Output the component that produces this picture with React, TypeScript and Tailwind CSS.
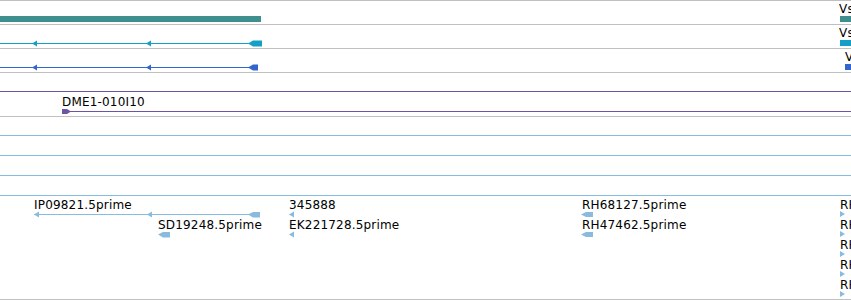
import React from "react";

function Label({ x, y, text }: { x: number; y: number; text: string }) {
  return (
    <div
      className="absolute whitespace-nowrap text-[12px] leading-[12px] tracking-[0.18px] text-black"
      style={{ left: x, top: y }}
    >
      {text}
    </div>
  );
}

function Divider() {
  return <div className="h-px w-full bg-[#c0c0c0] shrink-0" />;
}

export default function App() {
  return (
    <div
      className="w-[851px] h-[300px] bg-white overflow-hidden flex flex-col"
      style={{ fontFamily: '"DejaVu Sans", sans-serif' }}
    >
      <Divider />
      {/* Track 1 */}
      <div className="relative h-[23px] shrink-0">
        <svg className="absolute inset-0" width="851" height="23">
          <rect x="0" y="15" width="261" height="6" fill="#3f8f8f" />
          <rect x="840" y="15" width="11" height="6" fill="#3f8f8f" />
        </svg>
        <Label x={839} y={2} text="Vsx" />
      </div>
      <Divider />
      {/* Track 2 */}
      <div className="relative h-[23px] shrink-0">
        <svg className="absolute inset-0" width="851" height="23">
          <rect x="0" y="18" width="252" height="1" fill="#139fc6" />
          <polygon points="32,18.5 37,15.5 37,21.5" fill="#139fc6" />
          <polygon points="146,18.5 151,15.5 151,21.5" fill="#139fc6" />
          <polygon points="248,18.5 253,15.5 262,15.5 262,21.5 253,21.5" fill="#139fc6" />
          <rect x="840" y="15" width="11" height="6" fill="#139fc6" />
        </svg>
        <Label x={839} y={2} text="Vsx" />
      </div>
      <Divider />
      {/* Track 3 */}
      <div className="relative h-[23px] shrink-0">
        <svg className="absolute inset-0" width="851" height="23">
          <rect x="0" y="18" width="252" height="1" fill="#3366cc" />
          <polygon points="32,18.5 37,15.5 37,21.5" fill="#3366cc" />
          <polygon points="146,18.5 151,15.5 151,21.5" fill="#3366cc" />
          <polygon points="248,18.5 253,15.5 258,15.5 258,21.5 253,21.5" fill="#3366cc" />
          <rect x="845" y="15" width="6" height="6" fill="#3366cc" />
        </svg>
        <Label x={845} y={2} text="Vsx" />
      </div>
      <Divider />
      {/* Track 4 */}
      <div className="relative h-[43px] shrink-0">
        <svg className="absolute inset-0" width="851" height="43">
          <rect x="0" y="18" width="851" height="1" fill="#6e55a2" />
          <rect x="68" y="38" width="783" height="1" fill="#6e55a2" />
          <polygon points="62,36 67,36 71,38.5 67,41 62,41" fill="#6e55a2" />
        </svg>
        <Label x={62} y={23} text="DME1-010I10" />
      </div>
      <Divider />
      {/* Track 5 */}
      <div className="relative h-[182px] shrink-0">
        <svg className="absolute inset-0" width="851" height="182">
          <rect x="0" y="18" width="851" height="1" fill="#88bbdd" />
          <rect x="0" y="38" width="851" height="1" fill="#88bbdd" />
          <rect x="0" y="58" width="851" height="1" fill="#88bbdd" />
          <rect x="0" y="78" width="851" height="1" fill="#88bbdd" />
          <rect x="34" y="97" width="218" height="1" fill="#88bbdd" />
          <polygon points="34,97.5 39,94.5 39,100.5" fill="#88bbdd" />
          <polygon points="147,97.5 152,94.5 152,100.5" fill="#88bbdd" />
          <polygon points="248,97.5 253,95 260,95 260,100.5 253,100.5" fill="#88bbdd" />
          <polygon points="158,117.5 163,115 170,115 170,120.5 163,120.5" fill="#88bbdd" />
          <polygon points="289,97.5 294,94.5 294,100.5" fill="#88bbdd" />
          <polygon points="289,117.5 294,114.5 294,120.5" fill="#88bbdd" />
          <polygon points="581,97.5 586,95 593,95 593,100 586,100" fill="#88bbdd" />
          <polygon points="581,117.5 586,115 593,115 593,120 586,120" fill="#88bbdd" />
          <polygon points="840,94 845,97 840,100" fill="#88bbdd" />
          <polygon points="840,114 845,117 840,120" fill="#88bbdd" />
          <polygon points="840,134 845,137 840,140" fill="#88bbdd" />
          <polygon points="840,154 845,157 840,160" fill="#88bbdd" />
          <polygon points="840,174 845,177 840,180" fill="#88bbdd" />
        </svg>
        <Label x={34} y={82} text="IP09821.5prime" />
        <Label x={158} y={102} text="SD19248.5prime" />
        <Label x={289} y={82} text="345888" />
        <Label x={289} y={102} text="EK221728.5prime" />
        <Label x={582} y={82} text="RH68127.5prime" />
        <Label x={582} y={102} text="RH47462.5prime" />
        <Label x={840} y={82} text="RH00000" />
        <Label x={840} y={102} text="RH00000" />
        <Label x={840} y={122} text="RH00000" />
        <Label x={840} y={142} text="RH00000" />
        <Label x={840} y={162} text="RH00000" />
      </div>
      <Divider />
    </div>
  );
}
